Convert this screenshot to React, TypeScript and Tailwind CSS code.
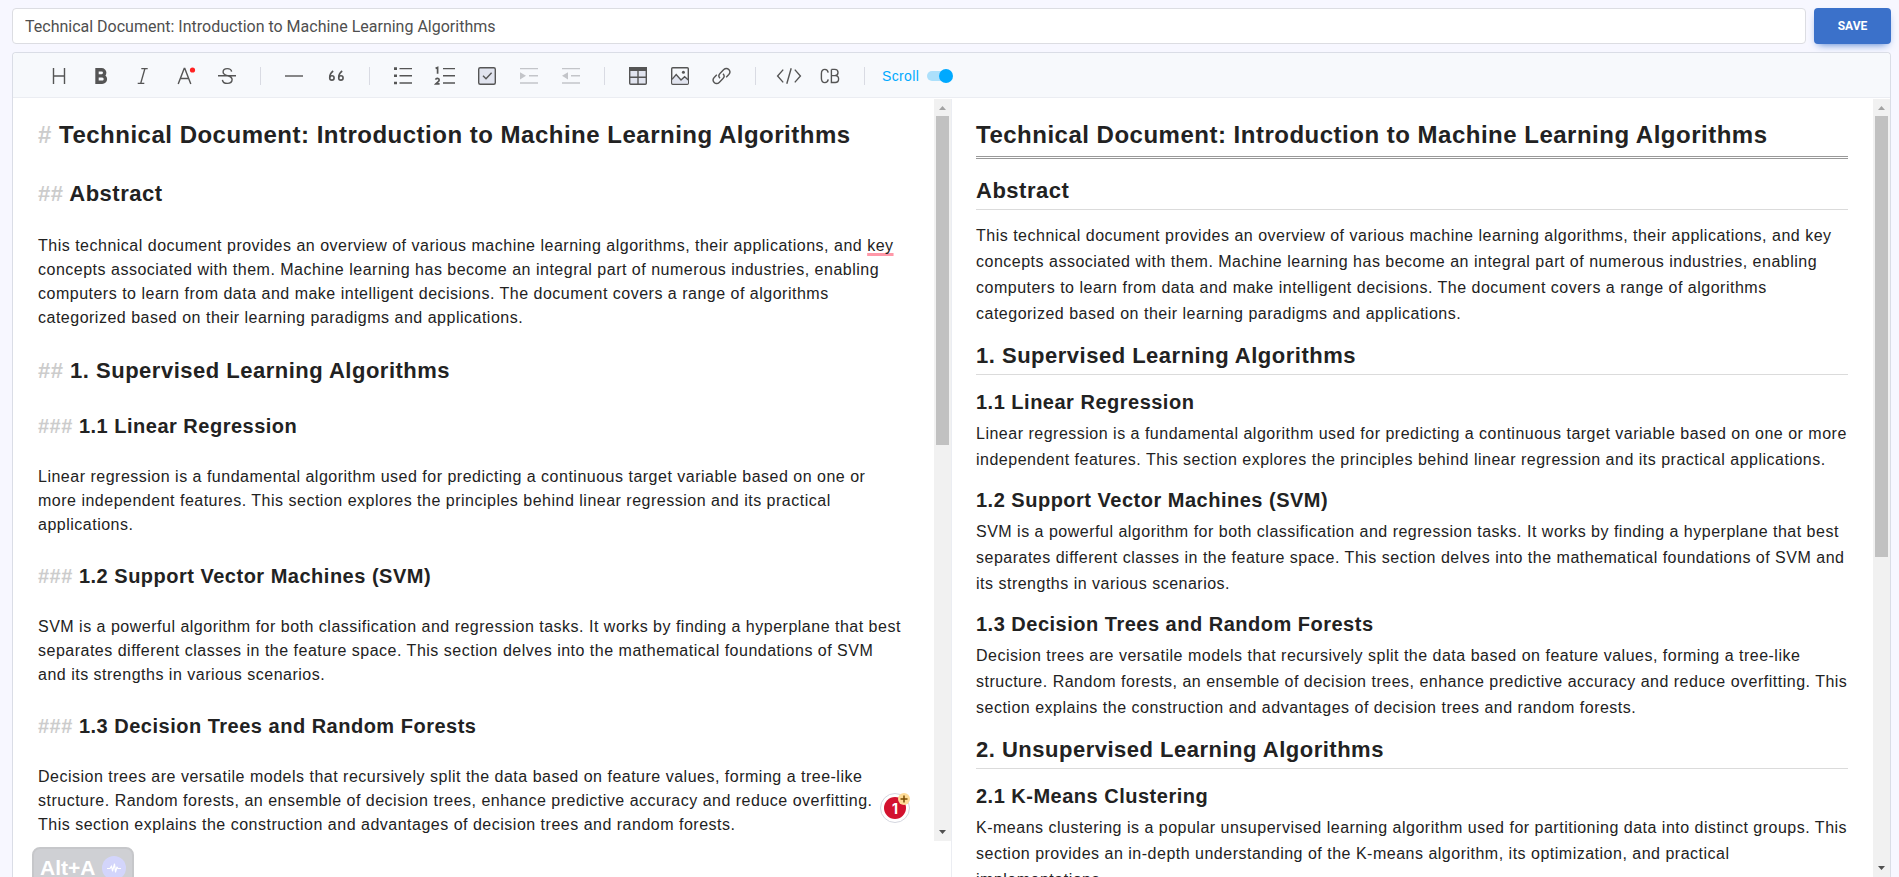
import type { ReactNode } from 'react';

type Block = { level: 1 | 2 | 3; title: string } | { level: 0; text: string };

const blocks: Block[] = [
  { level: 1, title: 'Technical Document: Introduction to Machine Learning Algorithms' },
  { level: 2, title: 'Abstract' },
  {
    level: 0,
    text: 'This technical document provides an overview of various machine learning algorithms, their applications, and key concepts associated with them. Machine learning has become an integral part of numerous industries, enabling computers to learn from data and make intelligent decisions. The document covers a range of algorithms categorized based on their learning paradigms and applications.',
  },
  { level: 2, title: '1. Supervised Learning Algorithms' },
  { level: 3, title: '1.1 Linear Regression' },
  {
    level: 0,
    text: 'Linear regression is a fundamental algorithm used for predicting a continuous target variable based on one or more independent features. This section explores the principles behind linear regression and its practical applications.',
  },
  { level: 3, title: '1.2 Support Vector Machines (SVM)' },
  {
    level: 0,
    text: 'SVM is a powerful algorithm for both classification and regression tasks. It works by finding a hyperplane that best separates different classes in the feature space. This section delves into the mathematical foundations of SVM and its strengths in various scenarios.',
  },
  { level: 3, title: '1.3 Decision Trees and Random Forests' },
  {
    level: 0,
    text: 'Decision trees are versatile models that recursively split the data based on feature values, forming a tree-like structure. Random forests, an ensemble of decision trees, enhance predictive accuracy and reduce overfitting. This section explains the construction and advantages of decision trees and random forests.',
  },
  { level: 2, title: '2. Unsupervised Learning Algorithms' },
  { level: 3, title: '2.1 K-Means Clustering' },
  {
    level: 0,
    text: 'K-means clustering is a popular unsupervised learning algorithm used for partitioning data into distinct groups. This section provides an in-depth understanding of the K-means algorithm, its optimization, and practical implementations.',
  },
];

function ToolButton({ label, disabled, children }: { label: string; disabled?: boolean; children: ReactNode }) {
  return (
    <button
      type="button"
      aria-label={label}
      disabled={disabled}
      className="h-8 w-8 shrink-0 rounded text-[#555] hover:bg-white disabled:text-[#c3c5c9]"
    >
      <svg viewBox="0 0 32 32" className="h-8 w-8" fill="none" stroke="currentColor" strokeWidth="1.4">
        {children}
      </svg>
    </button>
  );
}

function Divider() {
  return <div className="mx-[17px] h-[18px] w-px shrink-0 bg-[#d9dbe3]" />;
}

function Toolbar() {
  return (
    <div className="flex h-[45px] shrink-0 items-center rounded-t border-b border-[#ebedf2] bg-[#f7f9fc] pt-[2px] pl-[30px]">
      <div className="flex gap-[10px]">
        <ToolButton label="Headings">
          <path d="M10.5 8v16M21.5 8v16M10.5 16h11" />
        </ToolButton>
        <ToolButton label="Bold">
          <path d="M12 9.7h4.6a3.1 3.1 0 0 1 0 6.2H12zM12 15.9h5.2a3.2 3.2 0 0 1 0 6.4H12z" strokeWidth="3.4" />
        </ToolButton>
        <ToolButton label="Italic">
          <path d="M14.3 8.6h6.4M10.7 23.4h6.6M17.9 8.6l-4.2 14.8" />
        </ToolButton>
        <ToolButton label="Text color">
          <path d="M9.2 24l6-15.6h.6L21.8 24M11.3 18.5h8.4" />
          <circle cx="23.5" cy="10" r="2.6" fill="#ff2222" stroke="none" />
        </ToolButton>
        <ToolButton label="Strike">
          <path d="M7 15.8h18M20.6 11.6c-.3-2-2-3-4.3-3-2.5 0-4.2 1.3-4.2 3.4 0 5 9 2.4 9 7.6 0 2.3-2 3.8-4.8 3.8-2.8 0-4.6-1.3-4.9-3.6" />
        </ToolButton>
      </div>
      <Divider />
      <div className="flex gap-[10px]">
        <ToolButton label="Line">
          <path d="M7 16h18" />
        </ToolButton>
        <ToolButton label="Blockquote">
          <path d="M13.2 11c-2.3 1.6-3.5 4-3.5 6.6M22.2 11c-2.3 1.6-3.5 4-3.5 6.6" strokeWidth="1.6" />
          <circle cx="11.9" cy="17.9" r="2.2" strokeWidth="1.6" />
          <circle cx="20.9" cy="17.9" r="2.2" strokeWidth="1.6" />
        </ToolButton>
      </div>
      <Divider />
      <div className="flex gap-[10px]">
        <ToolButton label="Unordered list">
          <path d="M12.5 8.6H25M12.5 15.8H25M12.5 23H25" />
          <path d="M7 8.6h3M7 15.8h3M7 23h3" strokeWidth="2.6" />
        </ToolButton>
        <ToolButton label="Ordered list">
          <path d="M14 8.6h12M14 15.8h12M14 23h12" />
          <path d="M6.6 8.4l2-.8v6.2M6.6 19.6c.4-1.6 3.6-1.6 3.6.4 0 1.4-2 2.2-3.4 3.8h3.8" strokeWidth="1.7" />
        </ToolButton>
        <ToolButton label="Task">
          <rect x="7.7" y="7.7" width="16.6" height="16.6" rx="1.5" fill="#e1e4ef" />
          <path d="M12 15.8l3 3 5.6-6" />
        </ToolButton>
        <ToolButton label="Indent" disabled>
          <path d="M7 8.6h18M16 15.8h9M7 23h18" />
          <path d="M7 12.2v7.2l6-3.6z" fill="currentColor" stroke="none" />
        </ToolButton>
        <ToolButton label="Outdent" disabled>
          <path d="M7 8.6h18M16 15.8h9M7 23h18" />
          <path d="M13 12.2v7.2l-6-3.6z" fill="currentColor" stroke="none" />
        </ToolButton>
      </div>
      <Divider />
      <div className="flex gap-[10px]">
        <ToolButton label="Insert table">
          <rect x="7.7" y="7.7" width="16.6" height="16.6" rx="1" fill="#e1e4ef" />
          <path d="M7 7h18v4H7z" fill="currentColor" stroke="none" />
          <path d="M16 11v13M7 17.3h18" />
        </ToolButton>
        <ToolButton label="Insert image">
          <rect x="7.7" y="7.7" width="16.6" height="16.6" rx="1" />
          <path d="M8.4 19.6l4-4.6 4.6 5 3.6-3 3.4 2.6v4H8.4z" fill="#e1e4ef" stroke="none" />
          <path d="M8 19.4l4.2-4.8 4.8 5.4 3.6-3.2 4 3.4" />
          <circle cx="19.4" cy="12.2" r="1.5" fill="currentColor" stroke="none" />
        </ToolButton>
        <ToolButton label="Insert link">
          <path d="M14 18.2c-1.4-1.4-1.4-3.4 0-4.8l3.8-3.8c1.5-1.5 3.6-1.5 5 0s1.4 3.5 0 5l-2.6 2.6" />
          <path d="M17 13.8c1.4 1.4 1.4 3.4 0 4.8l-3.8 3.8c-1.5 1.5-3.6 1.5-5 0s-1.4-3.5 0-5l2.6-2.6" />
        </ToolButton>
      </div>
      <Divider />
      <div className="flex gap-[10px]">
        <ToolButton label="Inline code">
          <path d="M10.2 9.6L4.6 16l5.6 6.4M21.8 9.6l5.6 6.4-5.6 6.4M18.2 8.2l-4.4 15.6" />
        </ToolButton>
        <ToolButton label="Insert code block">
          <path d="M13.2 12.6c-.3-2-1.5-3.2-3.3-3.2-2.2 0-3.5 1.8-3.5 4.4v4.4c0 2.6 1.3 4.4 3.5 4.4 1.8 0 3-1.2 3.3-3.2M16.4 9.4h3.4c2 0 3.2 1.2 3.2 3.1s-1.2 3.1-3.2 3.1h-3.4M16.4 15.6h3.8c2.1 0 3.4 1.3 3.4 3.4s-1.3 3.5-3.4 3.5h-3.8V9.4" />
        </ToolButton>
      </div>
      <Divider />
      <label className="flex items-center gap-2 text-sm tracking-wide text-[#00a9ff]">
        Scroll
        <input
          type="checkbox"
          defaultChecked
          className="relative flex h-[14px] w-[26px] appearance-none items-center before:h-[10px] before:w-[24px] before:rounded-full before:bg-[#ace0fb] after:absolute after:right-0 after:h-[14px] after:w-[14px] after:rounded-full after:bg-[#00a9ff]"
        />
      </label>
    </div>
  );
}

function ScrollBar({ thumb }: { thumb: string }) {
  return (
    <div className="flex w-[17px] shrink-0 flex-col items-center bg-[#f1f1f1]" aria-hidden="true">
      <svg viewBox="0 0 17 17" className="h-[17px] w-[17px] shrink-0">
        <path d="M5 11h7L8.5 7z" fill="#a3a3a3" />
      </svg>
      <div className="min-h-0 w-full flex-1 px-[2px]">
        <div className="bg-[#c1c1c1]" style={{ height: thumb }} />
      </div>
      <svg viewBox="0 0 17 17" className="h-[17px] w-[17px] shrink-0">
        <path d="M5 6h7l-3.5 4z" fill="#505050" />
      </svg>
    </div>
  );
}

function SourceBlock({ block }: { block: Block }) {
  if (block.level === 0) {
    const [before, after] = block.text.split(' key ');
    return (
      <p className="text-base leading-6">
        {before}
        {after && (
          <>
            {' '}
            <span className="underline decoration-[#ff98a8] decoration-[3px] underline-offset-2 [text-decoration-skip-ink:none]">
              key
            </span>{' '}
            {after}
          </>
        )}
      </p>
    );
  }
  const mark = <span className="text-[#ccc]">{'#'.repeat(block.level)}</span>;
  if (block.level === 1) return <div className="text-[24px] leading-[36px] font-bold">{mark} {block.title}</div>;
  if (block.level === 2) return <div className="text-[22px] leading-[33px] font-bold">{mark} {block.title}</div>;
  return <div className="text-[20px] leading-[30px] font-bold">{mark} {block.title}</div>;
}

function PreviewBlock({ block }: { block: Block }) {
  if (block.level === 0) return <p className="my-[10px] text-base leading-[26px]">{block.text}</p>;
  if (block.level === 1) {
    return (
      <h1 className="mb-5 border-b-[3px] border-double border-[#999] pb-[7px] text-[24px] leading-[28px] font-bold">
        {block.title}
      </h1>
    );
  }
  if (block.level === 2) {
    return (
      <h2 className="mt-[17px] mb-[13px] border-b border-[#dbdbdb] pb-[7px] text-[22px] leading-[23px] font-bold">
        {block.title}
      </h2>
    );
  }
  return <h3 className="mt-[18px] text-[20px] leading-[18px] font-bold">{block.title}</h3>;
}

function GrammarBadge() {
  return (
    <button
      type="button"
      aria-label="Writing suggestions"
      className="absolute right-6 bottom-[18px] flex h-[30px] w-[30px] items-center justify-center rounded-full border border-[#d5d7e0] bg-white"
    >
      <span className="flex h-[22px] w-[22px] items-center justify-center rounded-full bg-[#d3122f] font-[Inter,sans-serif] text-[14px] font-bold text-white">
        1
      </span>
      <svg viewBox="0 0 12 12" className="absolute -top-px -right-px h-3 w-3">
        <circle cx="6" cy="6" r="6" fill="#ffdc97" />
        <path d="M6 2.5v7M2.5 6h7" stroke="#7a4a00" strokeWidth="1.5" />
      </svg>
    </button>
  );
}

export default function App() {
  return (
    <div className="relative flex h-screen flex-col gap-2 overflow-hidden bg-[#f7f7ff] pt-2 pr-2 pl-3 font-['Liberation_Sans',Arial,sans-serif] text-[#222]">
      <div className="flex shrink-0 gap-2">
        <input
          aria-label="Document title"
          defaultValue="Technical Document: Introduction to Machine Learning Algorithms"
          className="h-9 min-w-0 flex-1 rounded border border-[#dcdde2] bg-white px-3 font-[Roboto,sans-serif] text-base text-[#4f4f4f]"
        />
        <button
          type="button"
          className="h-9 w-[77px] rounded bg-[#3b71ca] font-[Roboto,sans-serif] text-xs font-bold text-white uppercase shadow-[0_4px_9px_-4px_#3b71ca]"
        >
          Save
        </button>
      </div>

      <div className="flex min-h-0 flex-1 flex-col rounded-t border border-b-0 border-[#dadde6] bg-white">
        <Toolbar />
        <div className="flex min-h-0 flex-1 pt-px">
          <div className="flex min-w-0 flex-1 pb-9">
            <div className="relative flex min-w-0 flex-1">
              <div
                role="textbox"
                aria-multiline="true"
                aria-label="Markdown source"
                contentEditable
                suppressContentEditableWarning
                spellCheck={false}
                className="flex min-w-0 flex-1 flex-col gap-6 overflow-hidden pt-[18px] pr-8 pl-[25px] text-[20px] tracking-wide outline-none"
              >
                {blocks.slice(0, 10).map((block, i) => (
                  <SourceBlock key={i} block={block} />
                ))}
              </div>
              <GrammarBadge />
            </div>
            <ScrollBar thumb="46.5%" />
          </div>
          <div className="flex min-w-0 flex-1 border-l border-[#ebedf2]">
            <div className="min-w-0 flex-1 overflow-hidden pt-[22px] pr-[25px] pl-6 text-[20px] tracking-wide">
              {blocks.map((block, i) => (
                <PreviewBlock key={i} block={block} />
              ))}
            </div>
            <ScrollBar thumb="59.3%" />
          </div>
        </div>
      </div>

      <div className="absolute -bottom-3 left-8 flex h-[42px] w-[102px] items-center justify-between rounded-lg border-2 border-[#c6c7ca] bg-[#cfd0d4] px-[6px] text-[21px] font-bold text-white">
        Alt+A
        <svg viewBox="0 0 24 24" className="h-6 w-6" fill="none" stroke="#fff" strokeWidth="1.2">
          <circle cx="12" cy="12" r="12" fill="#d3d5fb" stroke="none" />
          <path d="M5 12.5h3l1.5-2.5 1 5 2-7 1 8 1.5-5 1 1.5h3" strokeLinejoin="round" />
        </svg>
      </div>
    </div>
  );
}
